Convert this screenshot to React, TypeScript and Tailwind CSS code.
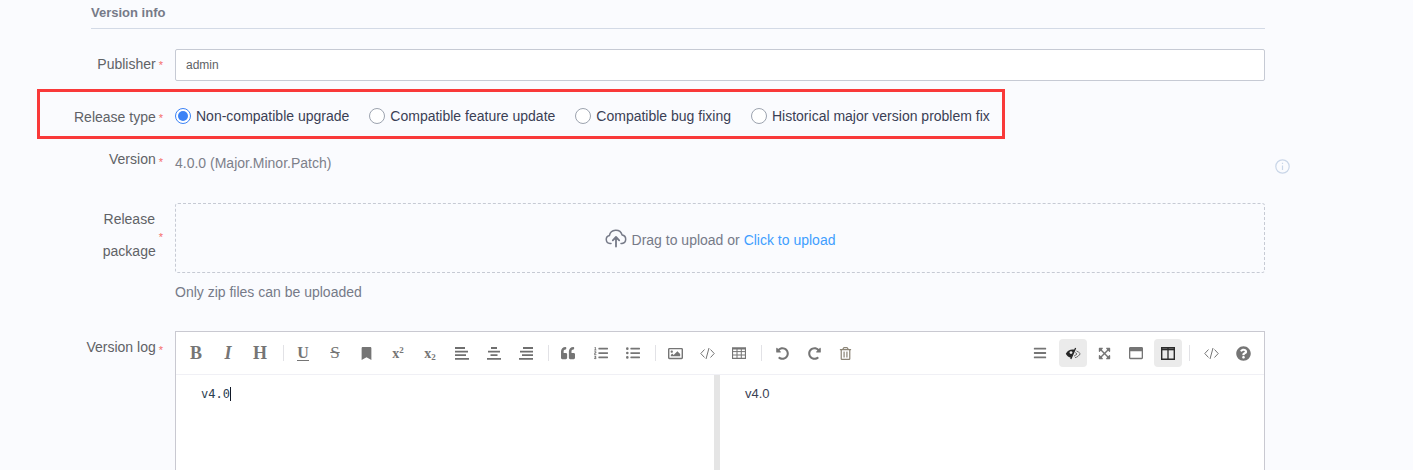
import React from "react";
import {
  FaBookmark, FaQuoteLeft, FaListOl, FaListUl, FaRegImage, FaUndoAlt, FaRedoAlt,
  FaRegTrashAlt, FaBars, FaExpandArrowsAlt, FaRegWindowMaximize, FaQuestionCircle,
} from "react-icons/fa";

function Req() {
  return <span className="ml-[3px] mt-[3px] text-[11px] text-[#f56c6c]">*</span>;
}

function Label({ children, className = "" }: { children: React.ReactNode; className?: string }) {
  return (
    <div className={"mr-[12px] flex w-[72px] shrink-0 justify-end whitespace-nowrap text-[14px] text-[#606266] " + className}>
      {children}
      <Req />
    </div>
  );
}

function Radio({ label, checked = false, className = "" }: { label: string; checked?: boolean; className?: string }) {
  return (
    <div className={"flex items-center gap-[5px] " + className}>
      <span className={"flex h-[16px] w-[16px] items-center justify-center rounded-full border bg-white " + (checked ? "border-[#3b82f6]" : "border-[#9ca3af]")}>
        {checked && <span className="h-[10px] w-[10px] rounded-full bg-[#3b82f6]" />}
      </span>
      <span className="text-[14px] text-[#3a3f55]">{label}</span>
    </div>
  );
}

function Sep({ className = "mx-[5px]" }: { className?: string }) {
  return <span className={"h-[16px] w-px shrink-0 bg-[#e2e2e6] " + className} />;
}

function Btn({ children, active = false, className = "mx-[2px]" }: { children: React.ReactNode; active?: boolean; className?: string }) {
  return (
    <span className={"flex h-[28px] w-[28px] shrink-0 items-center justify-center rounded-[4px] text-[#757575] " + className + (active ? " bg-[#ebebeb]" : "")}>
      {children}
    </span>
  );
}

function Align({ kind }: { kind: "l" | "c" | "r" }) {
  const d =
    kind === "l"
      ? "M0 1h10M0 4.600h13M0 8.200h11M0 11.800h14"
      : kind === "c"
        ? "M4 1h6M1 4.600h12M3.500 8.200h7M0 11.800h14"
        : "M4 1h10M1 4.600h13M3 8.200h11M0 11.800h14";
  return (
    <svg width="14" height="13" viewBox="0 0 14 13" stroke="#6f6f6f" strokeWidth="1.800" fill="none">
      <path d={d} />
    </svg>
  );
}

function CodeIcon() {
  return (
    <svg width="15" height="13" viewBox="0 0 15 13" stroke="#757575" strokeWidth="1" fill="none">
      <path d="M4.500 2.500 0.800 6.500l3.700 4M10.500 2.500l3.700 4-3.700 4M9 1 6 12" />
    </svg>
  );
}

function TableIcon() {
  return (
    <svg width="14" height="12" viewBox="0 0 14 12" stroke="#757575" strokeWidth="1" fill="none">
      <path d="M.5.800h13v10.500H.5zM.5 1.800h13" strokeWidth="1.200" />
      <path d="M.5 4.600h13M.5 8h13M5 1.500v10M9.300 1.500v10" />
    </svg>
  );
}

function EyeIcon() {
  return (
    <svg width="16" height="13" viewBox="0 0 16 13" fill="none">
      <path d="M.8 6.700C2.500 4 4.800 2.600 7.500 2.600c.8 0 1.500.1 2.200.4L6 10.800C3.800 10.400 2 9 .8 6.700z" fill="#262626" />
      <path d="M10.600 1 5.800 12" stroke="#262626" strokeWidth="1.300" />
      <path d="M11.500 4c1.500.6 2.800 1.500 3.700 2.700-1 1.800-2.800 3.500-5.200 4M10.200 5.500l1.800 1.500-3 2.200" stroke="#6f6f6f" strokeWidth="1" />
      <circle cx="6" cy="5.600" r="1.400" fill="#ebebeb" />
    </svg>
  );
}

function ColumnsIcon() {
  return (
    <svg width="14" height="13" viewBox="0 0 14 13" fill="none" stroke="#2b2b2b">
      <path d="M.7.700h12.600v11.600H.7z" strokeWidth="1.400" />
      <path d="M.7 2.400h12.600" strokeWidth="1.800" />
      <path d="M7 1v11" strokeWidth="1.300" />
    </svg>
  );
}

export default function App() {
  return (
    <div className="relative h-[470px] overflow-hidden bg-[#fafbfe] font-['Liberation_Sans',Arial,sans-serif]">
      <div className="absolute left-[37px] top-[89px] z-10 h-[50px] w-[968px] border-[3px] border-[#f93939]" />
      <div className="ml-[91px] w-[1174px]">
        <div className="h-[29px] border-b border-[#d3dae6] pt-[4px] text-[13px] font-bold leading-[17px] text-[#767a88]">
          Version info
        </div>

        <div className="mt-[20px] flex items-center">
          <Label className="pb-[2px]">Publisher</Label>
          <div className="flex-1">
            <div className="h-[32px] rounded-[2px] border border-[#c6cad4] bg-white pl-[10px] text-[12px] leading-[30px] text-[#606266]">
              admin
            </div>
          </div>
        </div>

        <div className="mt-[24px] flex h-[22px] items-center">
          <Label className="pt-[2px]">Release type</Label>
          <div className="flex">
            <Radio checked label="Non-compatible upgrade" />
            <Radio label="Compatible feature update" className="ml-[20px]" />
            <Radio label="Compatible bug fixing" className="ml-[20px]" />
            <Radio label="Historical major version problem fix" className="ml-[20px]" />
          </div>
        </div>

        <div className="relative mt-[23px] flex h-[28px] items-start">
          <Label className="leading-[18px]">Version</Label>
          <div className="pt-[4px] text-[14px] leading-[18px] text-[#7d808a]">4.0.0 (Major.Minor.Patch)</div>
          <svg className="absolute left-[1184px] top-[9px]" width="15" height="15" viewBox="0 0 15 15" fill="none" stroke="#c9d6e8" strokeWidth="1.200">
            <circle cx="7.500" cy="7.500" r="6.700" />
            <path d="M7.500 6.500v4.500M7.500 3.800v1.300" />
          </svg>
        </div>

        <div className="mt-[25px] flex">
          <div className="mr-[12px] flex h-[64px] w-[72px] shrink-0 items-center justify-end whitespace-nowrap text-[14px] leading-[32px] text-[#606266]">
            <span className="text-center">Release<br />package</span>
            <span className="ml-[3px] mt-[3px] text-[11px] leading-[14px] text-[#f56c6c]">*</span>
          </div>
          <div className="flex-1">
            <div className="flex h-[70px] items-center justify-center rounded-[3px] border border-dashed border-[#c6cad4] text-[14px] text-[#767a88]">
              <svg className="mr-[5px]" width="22" height="20" viewBox="0 0 22 20" fill="none" stroke="#767a88" strokeWidth="1.500" strokeLinecap="round" strokeLinejoin="round">
                <path d="M6 15.500H5a4 4 0 0 1-.6-7.900 6.500 6.500 0 0 1 12.700-.6 4.300 4.300 0 0 1-.1 8.500H16" />
                <path d="M11 18.500v-9M7.800 12.300 11 9l3.200 3.300" strokeWidth="1.800" />
              </svg>
              <span className="mt-[4px]">Drag to upload or&nbsp;</span>
              <span className="mt-[4px] text-[#409eff]">Click to upload</span>
            </div>
            <div className="mt-[10px] text-[14px] leading-[18px] text-[#767a88]">Only zip files can be uploaded</div>
          </div>
        </div>

        <div className="mt-[30px] flex">
          <Label className="pt-[6px] leading-[20px]">Version log</Label>
          <div className="h-[200px] flex-1 border border-[#c9c9d1] bg-white">
            <div className="flex h-[43px] items-center justify-between border-b border-[#f0f0f5] pl-[4px] pr-[5px]">
              <div className="flex items-center">
                <Btn><span className="font-['Liberation_Serif',serif] text-[18px] font-bold">B</span></Btn>
                <Btn><span className="font-['Liberation_Serif',serif] text-[18px] font-bold italic">I</span></Btn>
                <Btn><span className="font-['Liberation_Serif',serif] text-[18px] font-bold">H</span></Btn>
                <Sep className="ml-[7px] mr-[3px]" />
                <Btn><span className="border-b border-[#757575] font-['Liberation_Serif',serif] text-[16px] font-bold leading-[14px]">U</span></Btn>
                <Btn className="ml-[2px] mr-[1px]"><span className="font-['Liberation_Serif',serif] text-[17px] line-through">S</span></Btn>
                <Btn><FaBookmark size={13} /></Btn>
                <Btn><span className="font-['Liberation_Serif',serif] text-[14px] font-bold">x<sup className="text-[9px]">2</sup></span></Btn>
                <Btn><span className="font-['Liberation_Serif',serif] text-[14px] font-bold">x<sub className="text-[9px]">2</sub></span></Btn>
                <Btn><Align kind="l" /></Btn>
                <Btn><Align kind="c" /></Btn>
                <Btn><Align kind="r" /></Btn>
                <Sep className="ml-[6px] mr-[4px]" />
                <Btn className="ml-[1px] mr-[3px]"><FaQuoteLeft size={14} /></Btn>
                <Btn><FaListOl size={14} /></Btn>
                <Btn><FaListUl size={14} /></Btn>
                <Sep className="ml-[6px] mr-[3px]" />
                <Btn><FaRegImage size={15} /></Btn>
                <Btn><CodeIcon /></Btn>
                <Btn><TableIcon /></Btn>
                <Sep className="ml-[6px] mr-[4px]" />
                <Btn><FaUndoAlt size={13} /></Btn>
                <Btn className="ml-[2px] mr-[1px]"><FaRedoAlt size={13} /></Btn>
                <Btn><FaRegTrashAlt size={13} className="text-[#8c8577]" /></Btn>
              </div>
              <div className="flex items-center">
                <Btn><FaBars size={14} /></Btn>
                <Btn active className="ml-[3px] mr-[1px]"><EyeIcon /></Btn>
                <Btn><FaExpandArrowsAlt size={13} /></Btn>
                <Btn><FaRegWindowMaximize size={14} /></Btn>
                <Btn active><ColumnsIcon /></Btn>
                <Sep />
                <Btn><CodeIcon /></Btn>
                <Btn><FaQuestionCircle size={15} /></Btn>
              </div>
            </div>
            <div className="flex h-[156px]">
              <div className="w-[544px] border-r-[6px] border-[#e5e5e5] pl-[25px] pt-[10px] font-['DejaVu_Sans_Mono',monospace] text-[12px] leading-[18px] text-[#2c3e50]">
                <span className="border-r border-[#111827]">v4.0</span>
              </div>
              <div className="pl-[25px] pt-[10px] text-[13px] leading-[18px] text-[#3a3f55]">v4.0</div>
            </div>
          </div>
        </div>
      </div>
    </div>
  );
}
